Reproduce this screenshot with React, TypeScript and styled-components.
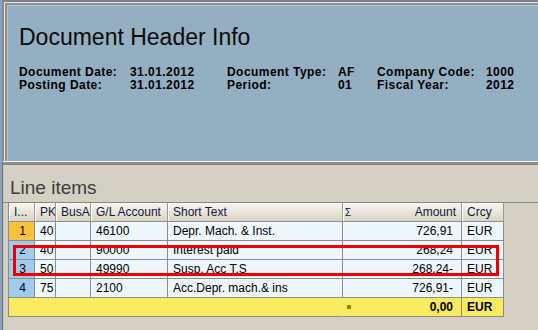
import React from 'react';
import styled, { createGlobalStyle } from 'styled-components';

const GlobalStyle = createGlobalStyle`
  html, body { margin: 0; padding: 0; }
  body {
    background: #d4d0c4;
    font-family: "Liberation Sans", Arial, sans-serif;
  }
`;

const Screen = styled.div`
  width: 538px;
  height: 330px;
  overflow: hidden;
  box-sizing: border-box;
  display: flex;
  flex-direction: column;
  border-left: 2px solid #8ba2b7;
  background: #d4d0c4;
`;

// upper blue panel with the document header
const HeaderPanel = styled.section`
  height: 161px;
  flex: none;
  box-sizing: border-box;
  background: #95afc2;
  border-top: 2px solid #76838f;
  border-left: 2px solid #8a8a8a;
  box-shadow: inset 1px 1px 0 #e4e6e8, inset 3px 3px 0 #8e8e8e, inset 4px 4px 0 #b9c4cc;
  padding: 21px 0 0 15px;
`;

const Title = styled.h1`
  margin: 0;
  font-size: 23px;
  line-height: 28px;
  font-weight: normal;
  color: #0a0a0a;
`;

const InfoGrid = styled.div`
  margin-top: 15px;
  display: grid;
  grid-template-columns: 111px 97px 111px 39px 109px auto;
  font-size: 12px;
  line-height: 13px;
  letter-spacing: 0.45px;
  font-weight: bold;
  color: #000;
`;

// lower beige panel with the line items
const ItemsPanel = styled.section`
  flex: 1;
  border-top: 1px solid #f6f6f4;
  border-left: 1px solid #6e757c;
  box-shadow: inset 1px 0 0 #c9c7bf;
  display: flex;
  flex-direction: column;
`;

const Divider = styled.div`
  height: 3px;
  background: #8b8a84;
`;

const SectionTitle = styled.h2`
  margin: 0;
  height: 38px;
  box-sizing: border-box;
  padding: 11px 0 0 7px;
  font-size: 19px;
  line-height: 24px;
  font-weight: normal;
  color: #3c3c3c;
  border-bottom: 1px solid #8a887e;
`;

const TableWrap = styled.div`
  position: relative;
  margin-left: 5px;
  width: 496px;
  border-left: 1px solid #8c8c8c;
`;

const COLS = '26px 21px 35px 77px 175px 119px 42px';

const Row = styled.div`
  display: grid;
  grid-template-columns: ${COLS};
  height: 19px;
`;

const HeadCell = styled.div<{ $right?: boolean }>`
  box-sizing: border-box;
  display: flex;
  justify-content: ${p => (p.$right ? 'space-between' : 'flex-start')};
  padding: 1px ${p => (p.$right ? '5px' : '0')} 0 ${p => (p.$right ? '2px' : '5px')};
  font-size: 12px;
  line-height: 17px;
  color: #16163a;
  white-space: nowrap;
  overflow: hidden;
  background: linear-gradient(#f8f7f1, #d8d4c5);
  border-right: 1px solid #9c9a90;
  border-bottom: 1px solid #8c8c8c;
  box-shadow: inset 1px 0 0 #ffffff;
`;

const Sigma = styled.span`
  font-size: 10px;
`;

const Cell = styled.div<{ $align?: 'left' | 'right'; $bg?: string; $bold?: boolean; $noRight?: boolean }>`
  box-sizing: border-box;
  padding: 0 ${p => (p.$align === 'right' ? '8px' : '2px')} 0 5px;
  text-align: ${p => p.$align || 'left'};
  font-size: 12px;
  line-height: 18px;
  font-weight: ${p => (p.$bold ? 'bold' : 'normal')};
  color: #000;
  white-space: nowrap;
  overflow: hidden;
  background: ${p => p.$bg || '#eef7fc'};
  border-right: 1px solid ${p => (p.$noRight ? 'transparent' : '#8c8c8c')};
  border-bottom: 1px solid #8c8c8c;
`;

const SpanCell = styled(Cell)`
  grid-column: span 5;
`;

const AmountCell = styled(Cell)`
  display: flex;
  align-items: center;
  justify-content: space-between;
  padding-left: 4px;
`;

const Marker = styled.span`
  width: 4px;
  height: 4px;
  background: #8a8a10;
`;

const Highlight = styled.div`
  position: absolute;
  left: 4px;
  top: 42px;
  width: 486px;
  height: 31px;
  box-sizing: border-box;
  border: 3px solid #f00000;
  pointer-events: none;
`;

const header = { date: '31.01.2012', type: 'AF', company: '1000', period: '01', year: '2012' };

const items = [
  { idx: 1, pk: '40', gl: '46100', text: 'Depr. Mach. & Inst.', amount: '726,91' },
  { idx: 2, pk: '40', gl: '90000', text: 'Interest paid', amount: '268,24' },
  { idx: 3, pk: '50', gl: '49990', text: 'Susp. Acc T.S', amount: '268,24-' },
  { idx: 4, pk: '75', gl: '2100', text: 'Acc.Depr. mach.& ins', amount: '726,91-' },
];

const App: React.FC = () => {
  return (
    <>
      <GlobalStyle />
      <Screen>
        <HeaderPanel>
          <Title>Document Header Info</Title>
          <InfoGrid>
            <span>Document Date:</span>
            <span>{header.date}</span>
            <span>Document Type:</span>
            <span>{header.type}</span>
            <span>Company Code:</span>
            <span>{header.company}</span>
            <span>Posting Date:</span>
            <span>{header.date}</span>
            <span>Period:</span>
            <span>{header.period}</span>
            <span>Fiscal Year:</span>
            <span>{header.year}</span>
          </InfoGrid>
        </HeaderPanel>

        <ItemsPanel>
          <Divider />
          <SectionTitle>Line items</SectionTitle>
          <TableWrap>
            <Row>
              <HeadCell>I...</HeadCell>
              <HeadCell>PK</HeadCell>
              <HeadCell>BusA</HeadCell>
              <HeadCell>G/L Account</HeadCell>
              <HeadCell>Short Text</HeadCell>
              <HeadCell $right>
                <Sigma>Σ</Sigma>
                <span>Amount</span>
              </HeadCell>
              <HeadCell>Crcy</HeadCell>
            </Row>
            {items.map(item => (
              <Row key={item.idx}>
                <Cell $align="right" $bg={item.idx === 1 ? '#f8c13c' : '#9fcbec'}>
                  {item.idx}
                </Cell>
                <Cell>{item.pk}</Cell>
                <Cell />
                <Cell>{item.gl}</Cell>
                <Cell>{item.text}</Cell>
                <Cell $align="right">{item.amount}</Cell>
                <Cell>EUR</Cell>
              </Row>
            ))}
            <Row>
              <SpanCell $bg="#f9eb5f" $noRight />
              <AmountCell $bg="#f9eb5f" $align="right" $bold>
                <Marker />
                <span>0,00</span>
              </AmountCell>
              <Cell $bg="#f9eb5f" $bold>EUR</Cell>
            </Row>
            <Highlight />
          </TableWrap>
        </ItemsPanel>
      </Screen>
    </>
  );
};

export default App;
